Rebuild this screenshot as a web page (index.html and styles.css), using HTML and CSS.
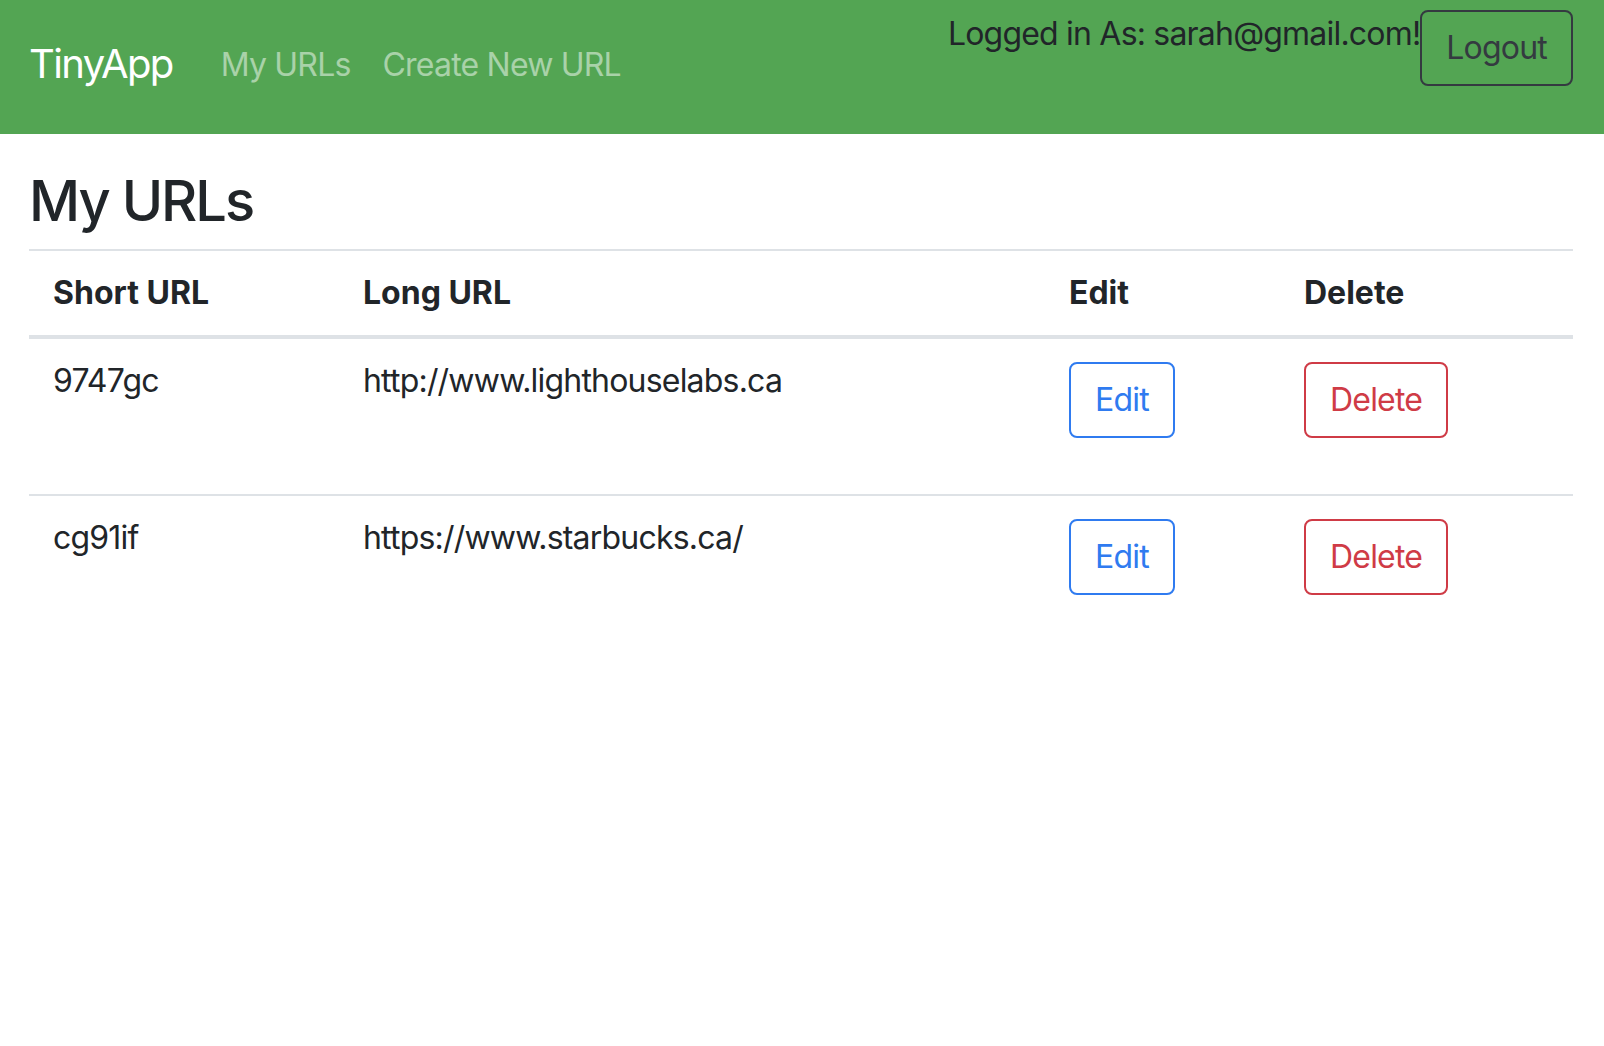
FILE: index.html
```html
<!DOCTYPE html>
<html lang="en">
<head>
<meta charset="utf-8">
<title>TinyApp - My URLs</title>
<link rel="stylesheet" href="styles.css">
</head>
<body>
<nav class="navbar">
  <a class="brand" href="#">TinyApp</a>
  <div class="nav-links">
    <a class="nav-link" href="#">My URLs</a>
    <a class="nav-link" href="#">Create New URL</a>
  </div>
  <div class="user">
    <span class="logged">Logged in As: sarah@gmail.com!</span>
    <form class="logout-form"><button type="button" class="btn btn-dark">Logout</button></form>
  </div>
</nav>
<main class="container">
  <h3 class="title">My URLs</h3>
  <table class="table">
    <thead>
      <tr>
        <th class="c-short">Short URL</th>
        <th class="c-long">Long URL</th>
        <th class="c-edit">Edit</th>
        <th class="c-del">Delete</th>
      </tr>
    </thead>
    <tbody>
      <tr>
        <td>9747gc</td>
        <td>http://www.lighthouselabs.ca</td>
        <td><form class="row-form"><button type="button" class="btn btn-primary">Edit</button></form></td>
        <td><form class="row-form"><button type="button" class="btn btn-danger">Delete</button></form></td>
      </tr>
      <tr>
        <td>cg91if</td>
        <td>https://www.starbucks.ca/</td>
        <td><form class="row-form"><button type="button" class="btn btn-primary">Edit</button></form></td>
        <td><form class="row-form"><button type="button" class="btn btn-danger">Delete</button></form></td>
      </tr>
    </tbody>
  </table>
</main>
</body>
</html>
```
FILE: styles.css
```css
* { box-sizing: border-box; }
html, body { margin: 0; padding: 0; }
body {
  font-family: Inter, "Noto Sans", "Liberation Sans", sans-serif;
  font-size: 32px;
  line-height: 48px;
  letter-spacing: -0.8px;
  color: #212529;
  background: #fff;
}
a { text-decoration: none; }

.navbar {
  height: 134px;
  background: #53a553;
  display: flex;
  align-items: center;
  padding: 0 31px 0 29px;
}
.brand {
  font-size: 40px;
  line-height: 60px;
  letter-spacing: -1.6px;
  color: #fff;
  margin-right: 32px;
  margin-top: -6px;
}
.nav-links { display: flex; margin-top: -4px; }
.nav-link {
  color: rgba(255,255,255,0.5);
  padding: 0 16px;
  font-size: 32px;
  line-height: 48px;
}
.user {
  margin-left: auto;
  align-self: flex-start;
  margin-top: 10px;
  display: flex;
  align-items: flex-start;
}
.logged { color: #212529; }
.logout-form { margin: 0; }

.btn {
  font-family: inherit;
  font-size: 32px;
  line-height: 48px;
  letter-spacing: -0.8px;
  padding: 12px 24px;
  border: 2px solid;
  border-radius: 8px;
  background: transparent;
  cursor: pointer;
}
.btn-dark { color: #343a40; border-color: #343a40; }
.btn-primary { color: #2f7bf0; border-color: #2f7bf0; }
.btn-danger { color: #cf3b46; border-color: #cf3b46; }

.container { padding: 0 31px 0 29px; }
.title {
  font-size: 56px;
  line-height: 67px;
  font-weight: 500;
  letter-spacing: -2px;
  margin: 34px 0 14px;
}
.table {
  width: 100%;
  border-collapse: collapse;
  border-top: 2px solid #dee2e6;
}
.table th {
  text-align: left;
  font-weight: 700;
  letter-spacing: 0;
  padding: 18px 24px;
  border-bottom: 4px solid #dee2e6;
}
.table td {
  vertical-align: top;
  padding: 18px 24px 24px;
  border-top: 2px solid #dee2e6;
}
.table tbody tr:first-child td { border-top: none; }
.c-short { width: 310px; }
.c-long { width: 706px; }
.c-edit { width: 235px; }
.row-form { margin: 5px 0 32px; }
```
